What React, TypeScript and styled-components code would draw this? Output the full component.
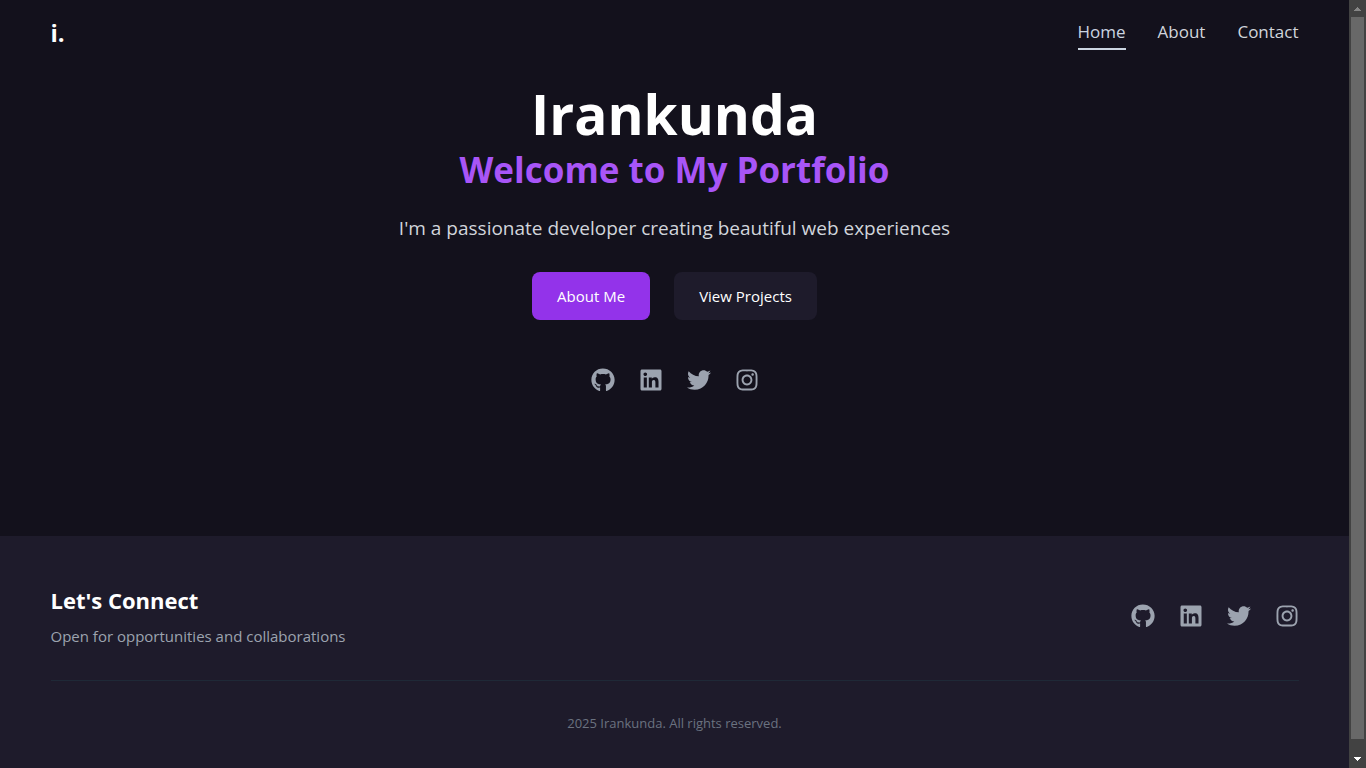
import React from "react";
import styled, { createGlobalStyle } from "styled-components";
import { FaGithub, FaInstagram, FaLinkedin, FaTwitter } from "react-icons/fa";

const GlobalStyle = createGlobalStyle`
  *, *::before, *::after { box-sizing: border-box; }
  body {
    margin: 0;
    background: #13111c;
    color: #ffffff;
    font-family: "Segoe UI", "Open Sans", "Noto Sans", sans-serif;
    font-size: 15px;
    line-height: 24px;
  }
  h1, h2, h3, p, ul { margin: 0; padding: 0; }
  a { color: inherit; text-decoration: none; }
`;

const Shell = styled.div`
  display: flex;
  align-items: flex-start;
`;

const Page = styled.div`
  flex: 1;
  min-width: 0;
  min-height: 100vh;
  display: flex;
  flex-direction: column;
`;

const Container = styled.div`
  width: 100%;
  max-width: 1280px;
  margin: 0 auto;
  padding: 0 16px;
`;

const HeaderRow = styled(Container)`
  display: flex;
  align-items: center;
  justify-content: space-between;
  height: 66px;
`;

const Logo = styled.a`
  font-size: 24px;
  line-height: 32px;
  font-weight: 700;
`;

const NavList = styled.ul`
  display: flex;
  gap: 32px;
  list-style: none;
`;

const NavLink = styled.a<{ $active?: boolean }>`
  display: block;
  padding: 2px 0;
  font-size: 17px;
  line-height: 28px;
  color: ${(p) => (p.$active ? "#cbd5e1" : "#d1d5db")};
  border-bottom: 2px solid ${(p) => (p.$active ? "#cbd5e1" : "transparent")};
`;

const Hero = styled.main`
  flex: 1;
  display: flex;
  flex-direction: column;
  align-items: center;
  padding: 18px 16px 144px;
  text-align: center;
`;

const Name = styled.h1`
  font-size: 55px;
  line-height: 60px;
  font-weight: 700;
`;

const Tagline = styled.h2`
  margin-top: 6px;
  font-size: 35px;
  line-height: 40px;
  font-weight: 700;
  color: #a855f7;
`;

const Intro = styled.p`
  margin: 24px 0 30px;
  font-size: 19px;
  line-height: 28px;
  color: #d1d5db;
`;

const Actions = styled.div`
  display: flex;
  gap: 24px;
  margin-bottom: 48px;
`;

const Button = styled.button<{ $primary?: boolean }>`
  height: 48px;
  padding: 0 25px;
  border: 0;
  border-radius: 8px;
  background: ${(p) => (p.$primary ? "#9333ea" : "#1e1b2b")};
  color: #ffffff;
  font: inherit;
  font-weight: 500;
  cursor: pointer;
`;

const SocialList = styled.ul`
  display: flex;
  gap: 24px;
  list-style: none;
  color: #9ca3af;
`;

const SocialLink = styled.a`
  display: block;
  svg { display: block; }
`;

const Footer = styled.footer`
  background: #1e1b2b;
  padding: 48px 0 35px;
`;

const FooterTop = styled.div`
  display: flex;
  align-items: center;
  justify-content: space-between;
`;

const FooterTitle = styled.h3`
  margin-bottom: 8px;
  font-size: 22px;
  line-height: 32px;
  font-weight: 700;
`;

const FooterText = styled.p`
  color: #9ca3af;
`;

const Copyright = styled.p`
  margin-top: 32px;
  padding-top: 32px;
  border-top: 1px solid #1f2937;
  font-size: 13px;
  line-height: 20px;
  text-align: center;
  color: #6b7280;
`;

const ScrollTrack = styled.div`
  position: sticky;
  top: 0;
  width: 17px;
  height: 100vh;
  padding: 7px 2px;
  display: flex;
  flex-direction: column;
  align-items: center;
  background: #424242;
`;

const ScrollThumb = styled.div`
  flex: 1;
  align-self: stretch;
  margin: 6px 0 18px;
  background: #686868;
`;

const socials = [
  { name: "GitHub", Icon: FaGithub },
  { name: "LinkedIn", Icon: FaLinkedin },
  { name: "Twitter", Icon: FaTwitter },
  { name: "Instagram", Icon: FaInstagram },
];

function Socials() {
  return (
    <SocialList>
      {socials.map(({ name, Icon }) => (
        <li key={name}>
          <SocialLink href="#" aria-label={name}>
            <Icon size={24} />
          </SocialLink>
        </li>
      ))}
    </SocialList>
  );
}

export default function App() {
  return (
    <Shell>
      <GlobalStyle />
      <Page>
        <header>
          <HeaderRow>
            <Logo href="#">i.</Logo>
            <nav>
              <NavList>
                <li><NavLink href="#" $active aria-current="page">Home</NavLink></li>
                <li><NavLink href="#">About</NavLink></li>
                <li><NavLink href="#">Contact</NavLink></li>
              </NavList>
            </nav>
          </HeaderRow>
        </header>
        <Hero>
          <Name>Irankunda</Name>
          <Tagline>Welcome to My Portfolio</Tagline>
          <Intro>I'm a passionate developer creating beautiful web experiences</Intro>
          <Actions>
            <Button $primary>About Me</Button>
            <Button>View Projects</Button>
          </Actions>
          <Socials />
        </Hero>
        <Footer>
          <Container>
            <FooterTop>
              <div>
                <FooterTitle>Let's Connect</FooterTitle>
                <FooterText>Open for opportunities and collaborations</FooterText>
              </div>
              <Socials />
            </FooterTop>
            <Copyright>2025 Irankunda. All rights reserved.</Copyright>
          </Container>
        </Footer>
      </Page>
      <ScrollTrack aria-hidden="true">
        <svg width="7" height="4" viewBox="0 0 7 4" shapeRendering="crispEdges" fill="#868686">
          <path d="M3 0h1v1h1v1h1v1h1v1H0V3h1V2h1V1h1z" />
        </svg>
        <ScrollThumb />
        <svg width="7" height="4" viewBox="0 0 7 4" shapeRendering="crispEdges" fill="#ffffff">
          <path d="M0 0h7v1H6v1H5v1H4v1H3V3H2V2H1V1H0z" />
        </svg>
      </ScrollTrack>
    </Shell>
  );
}
